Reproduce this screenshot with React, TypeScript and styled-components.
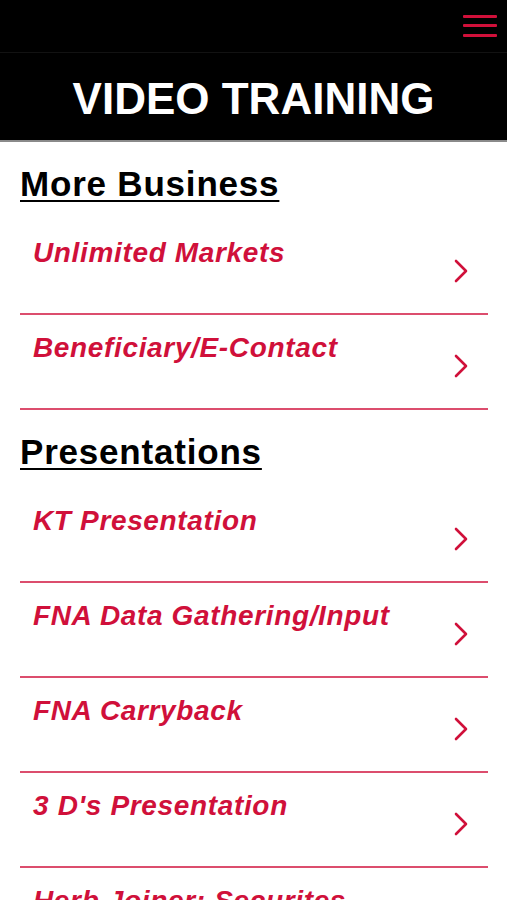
import React from 'react'
import styled, { createGlobalStyle } from 'styled-components'

const GlobalStyle = createGlobalStyle`
  body {
    margin: 0;
    background: #fff;
    font-family: 'Liberation Sans', Arial, sans-serif;
  }
`

const Page = styled.div`
  width: 507px;
  background: #fff;
`

const TopBar = styled.div`
  height: 53px;
  background: #000;
  border-bottom: 1px solid #121212;
  display: flex;
  align-items: center;
  justify-content: flex-end;
  padding-right: 10px;
  box-sizing: border-box;
`

const MenuButton = styled.button`
  background: none;
  border: none;
  padding: 0;
  width: 34px;
  height: 22px;
  display: flex;
  flex-direction: column;
  justify-content: space-between;
  margin-top: -1px;
  cursor: pointer;
`

const MenuLine = styled.span`
  display: block;
  height: 3px;
  width: 34px;
  background: #d0103a;
  border-radius: 1px;
`

const TitleBar = styled.div`
  height: 87px;
  background: #000;
  border-bottom: 2px solid #8a8a8a;
  display: flex;
  align-items: center;
  justify-content: center;
`

const Title = styled.h1`
  margin: 0;
  color: #fff;
  font-size: 44px;
  font-weight: 700;
  padding-top: 4px;
`

const Content = styled.div`
  margin: 0 19px 0 20px;
`

const SectionTitle = styled.h2`
  margin: 0;
  height: 78px;
  box-sizing: border-box;
  padding-top: 22px;
  font-size: 35px;
  line-height: 40px;
  font-weight: 700;
  letter-spacing: 0.8px;
  color: #000;
  text-decoration: underline;
  text-decoration-thickness: 2px;
  text-underline-offset: 4px;
`

const Row = styled.div`
  height: 95px;
  box-sizing: border-box;
  border-bottom: 2px solid #dc4d6d;
  display: flex;
  justify-content: space-between;
  padding: 17px 20px 0 13px;
  cursor: pointer;
`

const RowLabel = styled.span`
  color: #d0103a;
  font-size: 28px;
  line-height: 32px;
  font-weight: 700;
  font-style: italic;
  letter-spacing: 0.65px;
  white-space: nowrap;
`

const Chevron = styled.svg`
  flex: none;
  margin-top: 22px;
`

const sections = [
  {
    title: 'More Business',
    items: ['Unlimited Markets', 'Beneficiary/E-Contact']
  },
  {
    title: 'Presentations',
    items: [
      'KT Presentation',
      'FNA Data Gathering/Input',
      'FNA Carryback',
      "3 D's Presentation",
      'Herb Joiner: Securites'
    ]
  }
]

const App: React.FC = () => {
  return (
    <Page>
      <GlobalStyle />
      <TopBar>
        <MenuButton aria-label="Menu">
          <MenuLine />
          <MenuLine />
          <MenuLine />
        </MenuButton>
      </TopBar>
      <TitleBar>
        <Title>VIDEO TRAINING</Title>
      </TitleBar>
      <Content>
        {sections.map((section) => (
          <div key={section.title}>
            <SectionTitle>{section.title}</SectionTitle>
            {section.items.map((item) => (
              <Row key={item}>
                <RowLabel>{item}</RowLabel>
                <Chevron width="14" height="24" viewBox="0 0 14 24">
                  <path d="M2 2 L12 12 L2 22" fill="none" stroke="#d0103a" strokeWidth="2.6" strokeLinecap="round" strokeLinejoin="round" />
                </Chevron>
              </Row>
            ))}
          </div>
        ))}
      </Content>
    </Page>
  )
}

export default App
